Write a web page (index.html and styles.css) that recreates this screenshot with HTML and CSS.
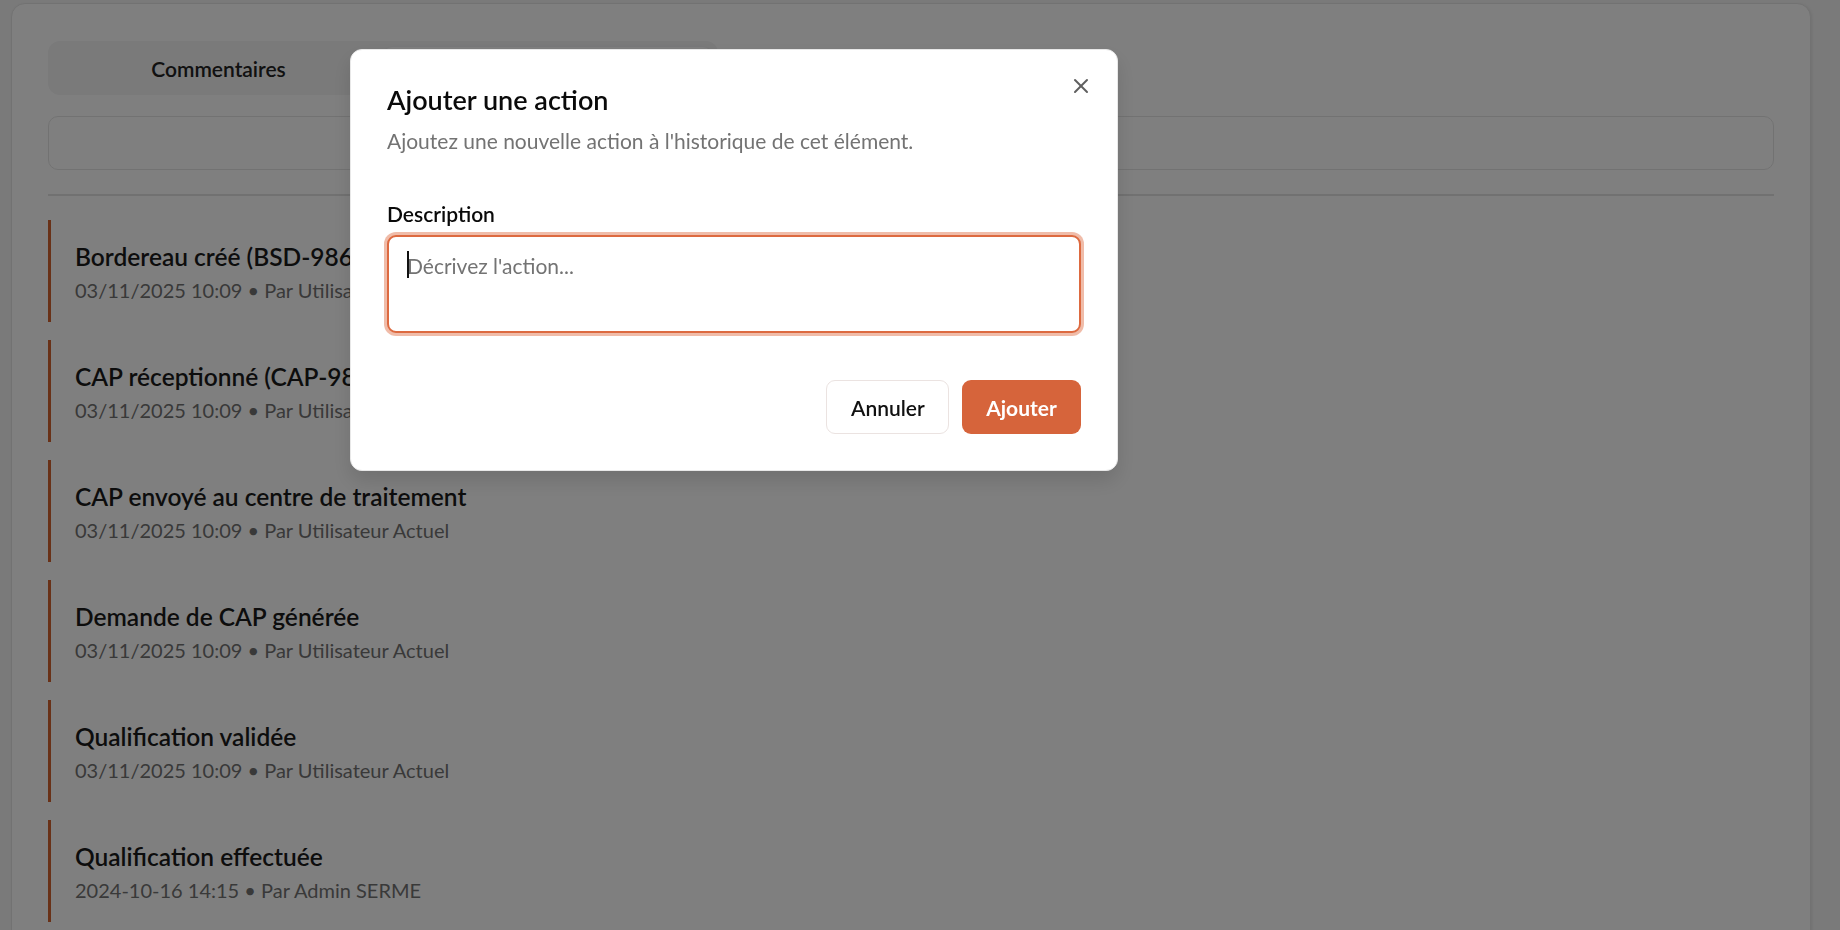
FILE: index.html
```html
<!DOCTYPE html>
<html lang="fr">
<head>
<meta charset="utf-8">
<title>Historique</title>
<link rel="stylesheet" href="styles.css">
</head>
<body>
<div class="card">
  <div class="tabs">
    <button class="tab">Commentaires</button>
    <button class="tab tab-active">Historique</button>
  </div>
  <button class="add-btn" aria-label="Ajouter une action">
    <svg class="plus" viewBox="0 0 24 24" width="24" height="24" fill="none" stroke="currentColor" stroke-width="2" stroke-linecap="round" stroke-linejoin="round"><path d="M5 12h14"/><path d="M12 5v14"/></svg>
  </button>
  <div class="sep"></div>
  <ul class="timeline">
    <li class="item"><div class="item-title">Bordereau créé (BSD-986542)</div><div class="item-meta">03/11/2025 10:09 • Par Utilisateur Actuel</div></li>
    <li class="item"><div class="item-title">CAP réceptionné (CAP-986542)</div><div class="item-meta">03/11/2025 10:09 • Par Utilisateur Actuel</div></li>
    <li class="item"><div class="item-title">CAP envoyé au centre de traitement</div><div class="item-meta">03/11/2025 10:09 • Par Utilisateur Actuel</div></li>
    <li class="item"><div class="item-title">Demande de CAP générée</div><div class="item-meta">03/11/2025 10:09 • Par Utilisateur Actuel</div></li>
    <li class="item"><div class="item-title">Qualification validée</div><div class="item-meta">03/11/2025 10:09 • Par Utilisateur Actuel</div></li>
    <li class="item"><div class="item-title">Qualification effectuée</div><div class="item-meta">2024-10-16 14:15 • Par Admin SERME</div></li>
  </ul>
</div>

<div class="overlay"></div>

<div class="dialog" role="dialog">
  <button class="close" aria-label="Fermer">
    <svg viewBox="0 0 24 24" width="24" height="24" fill="none" stroke="currentColor" stroke-width="2" stroke-linecap="round" stroke-linejoin="round"><path d="M18 6 6 18"/><path d="m6 6 12 12"/></svg>
  </button>
  <h2 class="dialog-title">Ajouter une action</h2>
  <p class="dialog-desc">Ajoutez une nouvelle action à l'historique de cet élément.</p>
  <div class="field">
    <label class="label" for="desc">Description</label>
    <div class="textarea-wrap">
      <textarea id="desc" class="textarea" placeholder="Décrivez l'action..."></textarea>
      <span class="caret"></span>
    </div>
  </div>
  <div class="footer">
    <button class="btn btn-outline">Annuler</button>
    <button class="btn btn-primary">Ajouter</button>
  </div>
</div>
</body>
</html>
```

FILE: styles.css
```css
* { box-sizing: border-box; }

html, body {
  margin: 0;
  height: 100%;
}

body {
  background: #f4f4f4;
  font-family: "Lato", "Noto Sans", sans-serif;
  color: #1a1a1a;
  overflow: hidden;
}

.card {
  margin: 3px 29px 0 11px;
  background: #ffffff;
  border: 1px solid #e5e5e5;
  border-radius: 14px;
  padding: 37px 36px 36px;
  min-height: 1000px;
  box-shadow: 1px 1px 3px rgba(0, 0, 0, 0.08);
}

.tabs {
  display: grid;
  grid-template-columns: 1fr 1fr;
  width: 670px;
  height: 54px;
  padding: 6px;
  background: #f4f4f5;
  border-radius: 12px;
}

.tab {
  border: 0;
  background: transparent;
  font-family: inherit;
  font-size: 21px;
  font-weight: 600;
  color: #222222;
  border-radius: 9px;
}

.tab-active {
  background: #ffffff;
  box-shadow: 0 1px 3px rgba(0, 0, 0, 0.1);
}

.add-btn {
  display: flex;
  width: 100%;
  height: 54px;
  margin-top: 21px;
  align-items: center;
  justify-content: center;
  border: 1px solid #e5e5e5;
  background: #ffffff;
  border-radius: 10px;
  color: #1a1a1a;
}

.sep {
  height: 2px;
  background: #e2e2e2;
  margin-top: 24px;
}

.timeline {
  list-style: none;
  margin: 24px 0 0;
  padding: 0;
  display: flex;
  flex-direction: column;
  gap: 18px;
}

.item {
  border-left: 3px solid #d2622f;
  padding: 19px 24px 17px;
}

.item-title {
  font-size: 24.5px;
  line-height: 36px;
  font-weight: 600;
  color: #1a1a1a;
}

.item-meta {
  font-size: 20px;
  line-height: 30px;
  color: #737373;
}

.overlay {
  position: fixed;
  inset: 0;
  background: rgba(0, 0, 0, 0.5);
}

.dialog {
  position: fixed;
  left: 350px;
  top: 49px;
  width: 768px;
  background: #ffffff;
  border: 1px solid #e8e8e8;
  border-radius: 12px;
  padding: 36px 36px 36px;
  box-shadow: 0 10px 20px rgba(0, 0, 0, 0.12);
}

.close {
  position: absolute;
  top: 24px;
  right: 24px;
  width: 24px;
  height: 24px;
  padding: 0;
  border: 0;
  background: transparent;
  color: #5f5f5f;
  display: flex;
}

.dialog-title {
  margin: 0;
  font-size: 27px;
  line-height: 27px;
  font-weight: 600;
  color: #0a0a0a;
}

.dialog-desc {
  margin: 13px 0 0;
  font-size: 21px;
  line-height: 30px;
  color: #737373;
}

.field {
  margin-top: 47px;
}

.label {
  display: block;
  font-size: 21px;
  line-height: 21px;
  font-weight: 600;
  color: #0a0a0a;
}

.textarea-wrap {
  position: relative;
  margin-top: 11px;
}

.textarea {
  display: block;
  width: 100%;
  height: 98px;
  border: 2px solid #dd6a40;
  border-radius: 9px;
  padding: 14px 18px 10px;
  font-family: inherit;
  font-size: 21px;
  line-height: 30px;
  color: #0a0a0a;
  resize: none;
  outline: none;
  box-shadow: 0 0 0 3px rgba(221, 106, 64, 0.45);
}

.textarea::placeholder {
  color: #737373;
}

.caret {
  position: absolute;
  left: 20px;
  top: 16px;
  width: 2px;
  height: 27px;
  background: #111111;
}

.footer {
  display: flex;
  justify-content: flex-end;
  gap: 13px;
  margin-top: 47px;
}

.btn {
  height: 54px;
  padding: 0 24px;
  border-radius: 9px;
  font-family: inherit;
  font-size: 21px;
  font-weight: 600;
}

.btn-outline {
  width: 123px;
  background: #ffffff;
  border: 1px solid #ebe3e1;
  color: #111111;
}

.btn-primary {
  width: 119px;
  background: #d6643b;
  border: 0;
  color: #ffffff;
  font-weight: 700;
}
```
